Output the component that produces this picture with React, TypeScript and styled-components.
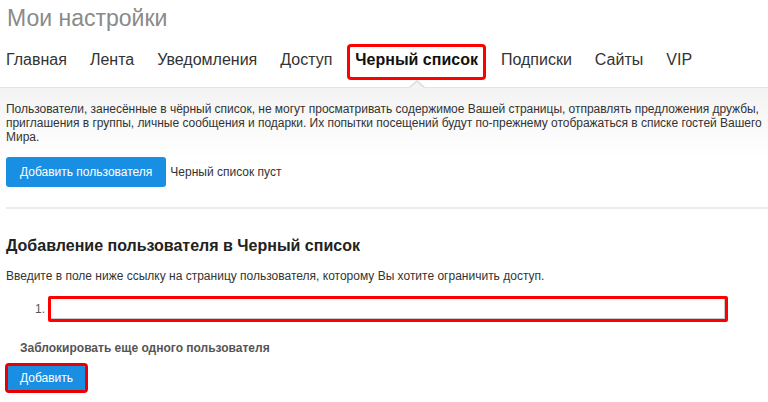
import styled, { createGlobalStyle, css } from "styled-components";

const GlobalStyle = createGlobalStyle`
  body {
    margin: 0;
    background: #fff;
    font-family: "Liberation Sans", Arial, sans-serif;
    color: #333;
  }
`;

type TabProps = {
  active?: boolean;
};

const tabs = ["Главная", "Лента", "Уведомления", "Доступ", "Черный список", "Подписки", "Сайты", "VIP"];

const App = () => {
  return (
    <>
      <GlobalStyle />
      <Page>
        <Title>Мои настройки</Title>
        <Tabs>
          {tabs.map((t) => (
            <Tab key={t} active={t === "Черный список"}>
              {t}
            </Tab>
          ))}
        </Tabs>
        <Panel>
          <Info>
            Пользователи, занесённые в чёрный список, не могут просматривать содержимое Вашей страницы, отправлять
            предложения дружбы, приглашения в группы, личные сообщения и подарки. Их попытки посещений будут
            по-прежнему отображаться в списке гостей Вашего Мира.
          </Info>
          <ActionRow>
            <BlueButton>Добавить пользователя</BlueButton>
            <EmptyNote>Черный список пуст</EmptyNote>
          </ActionRow>
        </Panel>
        <Section>
          <Heading>Добавление пользователя в Черный список</Heading>
          <Hint>Введите в поле ниже ссылку на страницу пользователя, которому Вы хотите ограничить доступ.</Hint>
          <InputRow>
            <Num>1.</Num>
            <LinkInput type="text" />
          </InputRow>
          <MoreLink>Заблокировать еще одного пользователя</MoreLink>
          <SubmitButton>Добавить</SubmitButton>
        </Section>
      </Page>
    </>
  );
};

export default App;

const Page = styled.div`
  width: 768px;
  height: 402px;
  overflow: hidden;
`;

const Title = styled.h1`
  margin: 5px 0 0 7px;
  font-size: 23px;
  line-height: 27px;
  font-weight: normal;
  color: #8a8a8a;
`;

const Tabs = styled.nav`
  display: flex;
  gap: 13px;
  margin: 15px 0 10px 1px;
`;

const Tab = styled.div<TabProps>`
  position: relative;
  padding: 4px 5px 8px;
  font-size: 16px;
  line-height: 18px;
  color: #333;
  cursor: pointer;

  ${({ active }) =>
    active &&
    css`
      font-weight: bold;
      color: #111;
      outline: 3px solid #f00;
      border-radius: 1px;

      &::before,
      &::after {
        content: "";
        position: absolute;
        left: 50%;
        transform: translateX(-50%);
        width: 0;
        height: 0;
        border-style: solid;
      }

      &::before {
        bottom: -10px;
        border-width: 0 8px 7px;
        border-color: transparent transparent #dcdcdc;
      }

      &::after {
        bottom: -11px;
        border-width: 0 7px 6px;
        border-color: transparent transparent #f4f4f4;
      }
    `}
`;

const Panel = styled.div`
  border-top: 1px solid #e3e3e3;
  background: linear-gradient(#f3f3f3, #fff 70px);
  padding: 14px 0 20px 6px;
`;

const Info = styled.p`
  margin: 0;
  font-size: 12px;
  line-height: 14px;
  letter-spacing: -0.03px;
  color: #333;
`;

const ActionRow = styled.div`
  display: flex;
  align-items: center;
  gap: 4px;
  margin-top: 13px;
`;

const BlueButton = styled.button`
  height: 30px;
  padding: 0 14px;
  border: none;
  border-radius: 3px;
  background: #198fe3;
  color: #fff;
  font-family: inherit;
  font-size: 12px;
  cursor: pointer;
`;

const EmptyNote = styled.span`
  font-size: 12px;
  color: #333;
`;

const Section = styled.div`
  margin-left: 6px;
  border-top: 2px solid #ececec;
  padding-top: 27px;
`;

const Heading = styled.h2`
  margin: 0;
  font-size: 16px;
  line-height: 20px;
  font-weight: bold;
  color: #222;
`;

const Hint = styled.p`
  margin: 13px 0 0;
  font-size: 12px;
  line-height: 14px;
  color: #333;
`;

const InputRow = styled.div`
  display: flex;
  align-items: center;
  gap: 3px;
  margin-top: 13px;
  padding-left: 29px;
`;

const Num = styled.span`
  font-size: 12px;
  color: #555;
`;

const LinkInput = styled.input`
  box-sizing: border-box;
  width: 680px;
  height: 26px;
  border: 3px solid #f00;
  border-radius: 2px;
  box-shadow: inset -1px -1px 0 #c8c8c8;
  outline: none;
  background: #fff;
`;

const MoreLink = styled.div`
  margin: 19px 0 0 14px;
  font-size: 12px;
  line-height: 14px;
  font-weight: bold;
  color: #555;
  cursor: pointer;
`;

const SubmitButton = styled(BlueButton)`
  display: block;
  height: 24px;
  margin: 11px 0 0 2px;
  padding: 0 12px;
  border-radius: 1px;
  outline: 3px solid #e80000;
`;
